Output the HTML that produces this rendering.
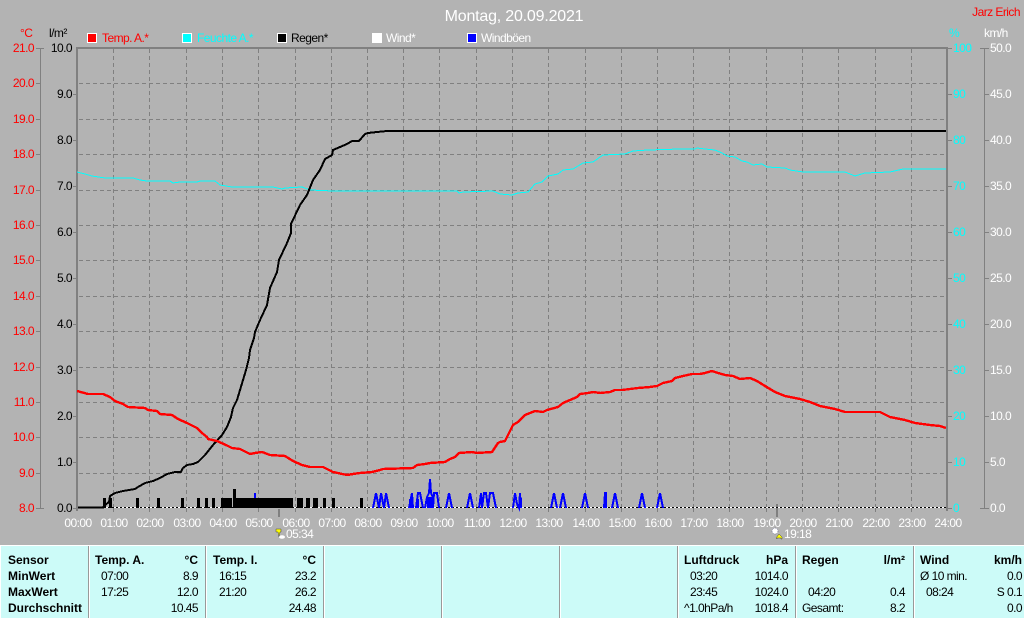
<!DOCTYPE html>
<html lang="de">
<head>
<meta charset="utf-8">
<title>Montag, 20.09.2021</title>
<style>
html,body{margin:0;padding:0;background:#b3b3b3;width:1024px;height:618px;overflow:hidden}
svg{display:block;font-family:"Liberation Sans",sans-serif;font-size:12px;letter-spacing:-.55px}
.r{text-anchor:end}.c{text-anchor:middle}
.red{fill:#f00}.cy{fill:#0ff}.wh{fill:#fff}.bk{fill:#000}
.b{font-weight:bold;letter-spacing:0}
polyline{shape-rendering:crispEdges}
</style>
</head>
<body>
<svg width="1024" height="618" viewBox="0 0 1024 618" xmlns="http://www.w3.org/2000/svg">
<rect width="1024" height="618" fill="#b3b3b3"/>

<!-- grid -->
<path fill="none" stroke="#808080" stroke-width="1" stroke-dasharray="4 3" d="M113.5 49V508M149.5 49V508M186.5 49V508M222.5 49V508M258.5 49V508M295.5 49V508M331.5 49V508M367.5 49V508M403.5 49V508M439.5 49V508M476.5 49V508M512.5 49V508M548.5 49V508M585.5 49V508M621.5 49V508M657.5 49V508M693.5 49V508M729.5 49V508M766.5 49V508M802.5 49V508M838.5 49V508M875.5 49V508M911.5 49V508"/>
<path fill="none" stroke="#808080" stroke-width="1" stroke-dasharray="4 3" d="M79 83.5H944M79 119.5H944M79 154.5H944M79 190.5H944M79 225.5H944M79 260.5H944M79 296.5H944M79 331.5H944M79 367.5H944M79 402.5H944M79 437.5H944M79 473.5H944"/>

<!-- frame + axes -->
<path fill="none" stroke="#808080" stroke-width="2" d="M77 511V48H947V511"/>
<path fill="none" stroke="#808080" stroke-width="1" d="M40.5 48V508M984.5 48V508M36 48.5H44M36 83.5H41M36 119.5H41M36 154.5H41M36 190.5H41M36 225.5H41M36 260.5H41M36 296.5H41M36 331.5H41M36 367.5H41M36 402.5H41M36 437.5H41M36 473.5H41M36 508.5H44M73 94.5H77M73 140.5H77M73 186.5H77M73 232.5H77M73 278.5H77M73 324.5H77M73 370.5H77M73 416.5H77M73 462.5H77M73 508.5H77M947 48.5H952M947 94.5H952M947 140.5H952M947 186.5H952M947 232.5H952M947 278.5H952M947 324.5H952M947 370.5H952M947 416.5H952M947 462.5H952M947 508.5H952M980 48.5H989M984 94.5H989M984 140.5H989M984 186.5H989M984 232.5H989M984 278.5H989M984 324.5H989M984 370.5H989M984 416.5H989M984 462.5H989M980 508.5H989"/>
<path fill="none" stroke="#808080" stroke-width="1" d="M113.5 508V512M149.5 508V512M186.5 508V512M222.5 508V512M258.5 508V512M295.5 508V512M331.5 508V512M367.5 508V512M403.5 508V512M439.5 508V512M476.5 508V512M512.5 508V512M548.5 508V512M585.5 508V512M621.5 508V512M657.5 508V512M693.5 508V512M729.5 508V512M766.5 508V512M802.5 508V512M838.5 508V512M875.5 508V512M911.5 508V512"/>
<path fill="none" stroke="#808080" stroke-width="2" d="M279 509V517M777 504V517"/>

<!-- baseline -->
<path d="M104 507.5H946" stroke="#fff" stroke-width="1" fill="none"/>
<path d="M104 507.5H946" stroke="#000" stroke-width="1" stroke-dasharray="2 2" fill="none"/>
<path d="M78 507.5H104" stroke="#000" stroke-width="2" fill="none"/>

<!-- cyan -->
<polyline fill="none" stroke="#0ff" stroke-width="1" points="77,172 85,174 92,176 105,178 133,178 140,180 147,181 170,181 173,183 180,182 197,182 200,181 215,181 220,185 232,187 273,187 282,189 285,188 302,187 310,190 333,191 457,191 459,193 463,192 493,191 500,194 512,195 518,193 528,192 535,184 542,182 548,176 558,174 563,170 573,169 583,163 593,162 603,155 625,154 633,151 648,150 680,149 695,149 697,148 705,149 715,150 722,153 727,156 735,157 742,161 747,162 753,165 762,164 767,167 785,168 790,170 803,172 845,172 855,176 865,173 890,172 903,169 946,169"/>

<!-- rain bars -->
<path fill="#000" d="M103 498h3v10h-3zM109 498h3v10h-3zM136 498h3v10h-3zM157 498h3v10h-3zM181 498h3v10h-3zM197 498h3v10h-3zM205 498h3v10h-3zM212 498h3v10h-3zM221 498h11v10h-11zM233 489h3v19h-3zM236 498h57v10h-57zM297 498h6v10h-6zM306 498h3v10h-3zM309 498h1v10h-1zM313 498h5v10h-5zM323 498h3v10h-3zM332 498h3v10h-3zM360 498h3v10h-3z"/>

<!-- gusts -->
<g fill="none" stroke="#00f" stroke-width="2">
<polyline points="373,508 376,493 379,508 381,493 384,508 386,493 389,508"/>
<polyline points="409,508 412,493 413,508"/>
<polyline points="416,508 418,493 420,493 423,508"/>
<polyline points="425,508 427,497 429,493 430,479 431,493 433,497 433,508 434,493 437,493 439,508"/>
<polyline points="446,508 449,493 452,508"/>
<polyline points="467,508 470,493 473,508"/>
<polyline points="479,508 481,493 482,508 484,493 486,493 488,508 490,493 493,493 496,508"/>
<polyline points="513,508 515,493 517,504 519,508 520,493 521,508"/>
<polyline points="551,508 554,493 557,508"/>
<polyline points="560,508 563,493 566,508"/>
<polyline points="582,508 585,493 588,508"/>
<polyline points="604,508 605,493 606,493 606,508"/>
<polyline points="612,508 615,493 618,508"/>
<polyline points="639,508 642,493 645,508"/>
<polyline points="657,508 660,493 663,508"/>
</g>
<path d="M255 493V498" stroke="#00f" stroke-width="2" fill="none"/>
<path fill="#00f" d="M427 497h6v11h-6zM416 499h3v9h-3zM409 499h3v9h-3zM519 498h3v10h-3zM604 493h3v15h-3z"/>

<!-- rain total -->
<polyline fill="none" stroke="#000" stroke-width="2" points="102,508 105,505 109,502 110,496 115,493 123,491 135,489 138,487 145,483 153,481 160,478 167,474 175,472 181,472 183,468 187,465 193,464 198,462 205,455 213,445 222,435 227,427 231,417 233,408 237,400 243,380 246,370 249,358 250,350 254,338 255,332 260,320 261,318 267,305 270,288 277,272 279,260 287,243 291,233 291,224 300,205 307,195 313,180 320,170 325,159 332,155 333,150 340,147 347,144 352,141 359,141 365,134 368,133 377,132 387,131 946,131"/>

<!-- red -->
<polyline fill="none" stroke="#f00" stroke-width="2.4" points="77,391 88,394 103,394 110,397 115,401 123,404 128,407 145,408 148,410 157,411 160,414 172,415 178,419 187,423 197,428 202,433 207,437 208,439 217,441 228,446 232,448 240,449 250,454 255,453 262,452 270,455 285,456 293,461 302,465 310,467 317,467 323,467 333,472 347,475 353,474 360,473 372,472 380,470 383,469 413,468 417,465 425,464 430,463 445,462 450,459 455,457 459,453 472,452 477,453 492,452 498,443 500,442 505,441 508,435 513,425 518,422 525,415 535,411 543,412 547,410 558,407 563,403 577,397 580,394 588,393 593,392 600,393 610,392 615,390 622,390 630,389 638,388 650,387 657,386 663,383 672,381 675,378 683,376 692,374 700,374 705,373 712,371 718,373 725,375 733,376 740,379 750,378 757,381 765,386 775,392 785,396 800,399 810,402 820,406 835,409 845,412 880,412 890,417 905,420 915,423 930,425 940,426 946,428"/>

<!-- title -->
<text x="514" y="21" class="c wh" style="font-size:16px;letter-spacing:-.2px">Montag, 20.09.2021</text>
<text x="1020" y="16" class="r red">Jarz Erich</text>

<!-- legend -->
<g stroke="#fff" stroke-width="1">
<rect x="87.5" y="33.5" width="9" height="9" fill="#f00"/>
<rect x="182.5" y="33.5" width="9" height="9" fill="#0ff"/>
<rect x="277.5" y="33.5" width="9" height="9" fill="#000"/>
<rect x="372.5" y="33.5" width="9" height="9" fill="#fff"/>
<rect x="467.5" y="33.5" width="9" height="9" fill="#00f"/>
</g>
<text x="102" y="42" class="red">Temp. A.*</text>
<text x="197" y="42" class="cy">Feuchte A.*</text>
<text x="291" y="42" class="bk">Regen*</text>
<text x="386" y="42" class="wh">Wind*</text>
<text x="481" y="42" class="wh">Windböen</text>

<!-- axis headers -->
<text x="20" y="37" class="red">°C</text>
<text x="49" y="37" class="bk">l/m²</text>
<text x="949" y="37" class="cy">%</text>
<text x="984" y="37" class="wh">km/h</text>

<!-- temp labels -->
<g class="red" text-anchor="end">
<text x="34" y="52">21.0</text><text x="34" y="87">20.0</text><text x="34" y="123">19.0</text><text x="34" y="158">18.0</text><text x="34" y="194">17.0</text><text x="34" y="229">16.0</text><text x="34" y="264">15.0</text><text x="34" y="300">14.0</text><text x="34" y="335">13.0</text><text x="34" y="371">12.0</text><text x="34" y="406">11.0</text><text x="34" y="441">10.0</text><text x="34" y="477">9.0</text><text x="34" y="512">8.0</text>
</g>
<!-- rain labels -->
<g class="bk" text-anchor="end">
<text x="72" y="52">10.0</text><text x="72" y="98">9.0</text><text x="72" y="144">8.0</text><text x="72" y="190">7.0</text><text x="72" y="236">6.0</text><text x="72" y="282">5.0</text><text x="72" y="328">4.0</text><text x="72" y="374">3.0</text><text x="72" y="420">2.0</text><text x="72" y="466">1.0</text><text x="72" y="512">0.0</text>
</g>
<!-- humidity labels -->
<g class="cy">
<text x="953" y="52">100</text><text x="953" y="98">90</text><text x="953" y="144">80</text><text x="953" y="190">70</text><text x="953" y="236">60</text><text x="953" y="282">50</text><text x="953" y="328">40</text><text x="953" y="374">30</text><text x="953" y="420">20</text><text x="953" y="466">10</text><text x="953" y="512">0</text>
</g>
<!-- wind labels -->
<g class="wh">
<text x="990" y="52">50.0</text><text x="990" y="98">45.0</text><text x="990" y="144">40.0</text><text x="990" y="190">35.0</text><text x="990" y="236">30.0</text><text x="990" y="282">25.0</text><text x="990" y="328">20.0</text><text x="990" y="374">15.0</text><text x="990" y="420">10.0</text><text x="990" y="466">5.0</text><text x="990" y="512">0.0</text>
</g>
<!-- hour labels -->
<g class="wh" text-anchor="middle">
<text x="78" y="527">00:00</text><text x="114" y="527">01:00</text><text x="150" y="527">02:00</text><text x="187" y="527">03:00</text><text x="223" y="527">04:00</text><text x="259" y="527">05:00</text><text x="296" y="527">06:00</text><text x="332" y="527">07:00</text><text x="368" y="527">08:00</text><text x="404" y="527">09:00</text><text x="440" y="527">10:00</text><text x="477" y="527">11:00</text><text x="513" y="527">12:00</text><text x="549" y="527">13:00</text><text x="586" y="527">14:00</text><text x="622" y="527">15:00</text><text x="658" y="527">16:00</text><text x="694" y="527">17:00</text><text x="730" y="527">18:00</text><text x="767" y="527">19:00</text><text x="803" y="527">20:00</text><text x="839" y="527">21:00</text><text x="876" y="527">22:00</text><text x="912" y="527">23:00</text><text x="948" y="527">24:00</text>
</g>

<!-- sunrise / sunset -->
<path fill="#ff0" stroke="#444" stroke-width=".5" d="M276 529h5v3h-1l-1 5-1-5h-2z"/>
<ellipse cx="282" cy="537" rx="3" ry="1.8" fill="#fff"/>
<text x="286" y="538" class="wh">05:34</text>
<ellipse cx="775" cy="531" rx="3" ry="3" fill="#fff" stroke="#336" stroke-width=".5" stroke-dasharray="1 1"/>
<path fill="#ff0" stroke="#444" stroke-width=".5" d="M779 534l3 3v2h-1v-1h-4v1l-1-1z"/>
<text x="784" y="538" class="wh">19:18</text>

<!-- table -->
<rect x="0" y="545" width="1024" height="73" fill="#ccfbf8"/>
<rect x="0" y="545" width="1024" height="1" fill="#fff"/>
<rect x="0" y="545" width="1" height="73" fill="#fff"/>
<path fill="none" stroke="#999" stroke-width="1" d="M88.5 546V618M205.5 546V618M323.5 546V618M441.5 546V618M559.5 546V618M677.5 546V618M795.5 546V618M913.5 546V618"/>
<path fill="none" stroke="#fff" stroke-width="1" d="M89.5 546V618M206.5 546V618M324.5 546V618M442.5 546V618M560.5 546V618M678.5 546V618M796.5 546V618M914.5 546V618"/>

<g class="bk">
<text x="8" y="564" class="b">Sensor</text>
<text x="8" y="580" class="b">MinWert</text>
<text x="8" y="596" class="b">MaxWert</text>
<text x="8" y="612" class="b">Durchschnitt</text>

<text x="95" y="564" class="b">Temp. A.</text>
<text x="198" y="564" class="b r">°C</text>
<text x="101" y="580">07:00</text><text x="198" y="580" class="r">8.9</text>
<text x="101" y="596">17:25</text><text x="198" y="596" class="r">12.0</text>
<text x="198" y="612" class="r">10.45</text>

<text x="213" y="564" class="b">Temp. I.</text>
<text x="316" y="564" class="b r">°C</text>
<text x="219" y="580">16:15</text><text x="316" y="580" class="r">23.2</text>
<text x="219" y="596">21:20</text><text x="316" y="596" class="r">26.2</text>
<text x="316" y="612" class="r">24.48</text>

<text x="684" y="564" class="b">Luftdruck</text>
<text x="788" y="564" class="b r">hPa</text>
<text x="690" y="580">03:20</text><text x="788" y="580" class="r">1014.0</text>
<text x="690" y="596">23:45</text><text x="788" y="596" class="r">1024.0</text>
<text x="684" y="612">^1.0hPa/h</text><text x="788" y="612" class="r">1018.4</text>

<text x="802" y="564" class="b">Regen</text>
<text x="905" y="564" class="b r">l/m²</text>
<text x="808" y="596">04:20</text><text x="905" y="596" class="r">0.4</text>
<text x="802" y="612">Gesamt:</text><text x="905" y="612" class="r">8.2</text>

<text x="920" y="564" class="b">Wind</text>
<text x="1022" y="564" class="b r">km/h</text>
<text x="920" y="580">Ø 10 min.</text><text x="1022" y="580" class="r">0.0</text>
<text x="926" y="596">08:24</text><text x="1022" y="596" class="r">S 0.1</text>
<text x="1022" y="612" class="r">0.0</text>
</g>
</svg>
</body>
</html>
